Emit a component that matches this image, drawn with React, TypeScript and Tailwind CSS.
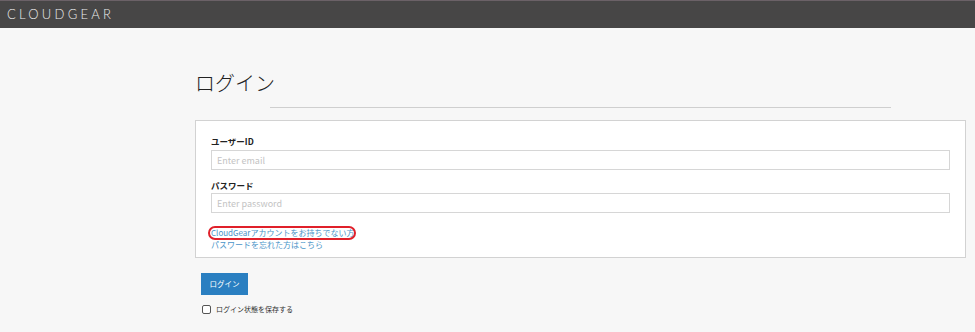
export default function App() {
  const jp = "font-['Noto_Sans_CJK_JP','Noto_Sans',sans-serif]";
  return (
    <div className={`min-h-[332px] w-[975px] bg-[#f7f7f7] ${jp}`}>
      <header className="flex h-[28px] items-center border-t border-[#6b6167] bg-[#474646] pl-[7px]">
        <span className="font-['Lato',sans-serif] text-[13px] font-light tracking-[0.25em] text-[#ececec]">
          CLOUDGEAR
        </span>
      </header>

      <main className="pl-[195px] pr-[9px]">
        <h1 className="mt-[41px] text-[20px] font-light leading-[28px] text-[#222]">ログイン</h1>
        <div className="ml-[75px] mr-[75px] mt-[10px] h-px bg-[#cfcfcf]" />

        <section className="mt-[12px] h-[138px] border border-[#d2d2d2] bg-white px-[15px] pt-[14px]">
          <label className="block text-[8.5px] font-bold leading-[12px] text-[#222]">ユーザーID</label>
          <input
            className="mt-[3px] block h-[20px] w-full border border-[#d6d6d6] px-[5px] text-[9px] placeholder:text-[#c3c3c3]"
            placeholder="Enter email"
          />
          <label className="mt-[9px] block text-[8.5px] font-bold leading-[12px] text-[#222]">パスワード</label>
          <input
            type="password"
            className="mt-[2px] block h-[20px] w-full border border-[#d6d6d6] px-[5px] text-[9px] placeholder:text-[#c3c3c3]"
            placeholder="Enter password"
          />
          <div className="mt-[14px] flex flex-col items-start text-[8px] leading-[12px] text-[#4a94c8]">
            <a className="relative">
              CloudGearアカウントをお持ちでない方
              <span className="pointer-events-none absolute -left-[3px] -right-[2px] -top-[1px] h-[14px] rounded-[7px] border-2 border-[#e0202a]" />
            </a>
            <a>パスワードを忘れた方はこちら</a>
          </div>
        </section>

        <button className="ml-[6px] mt-[15px] flex h-[22px] w-[47px] items-center justify-center bg-[#2a7fc1] text-[7.5px] text-white">
          ログイン
        </button>
        <label className="ml-[7px] mt-[9px] flex items-center gap-[5px] text-[7px] text-[#333]">
          <span className="h-[9px] w-[9px] rounded-[2px] border border-[#555] bg-white" />
          ログイン状態を保存する
        </label>
      </main>
    </div>
  );
}
